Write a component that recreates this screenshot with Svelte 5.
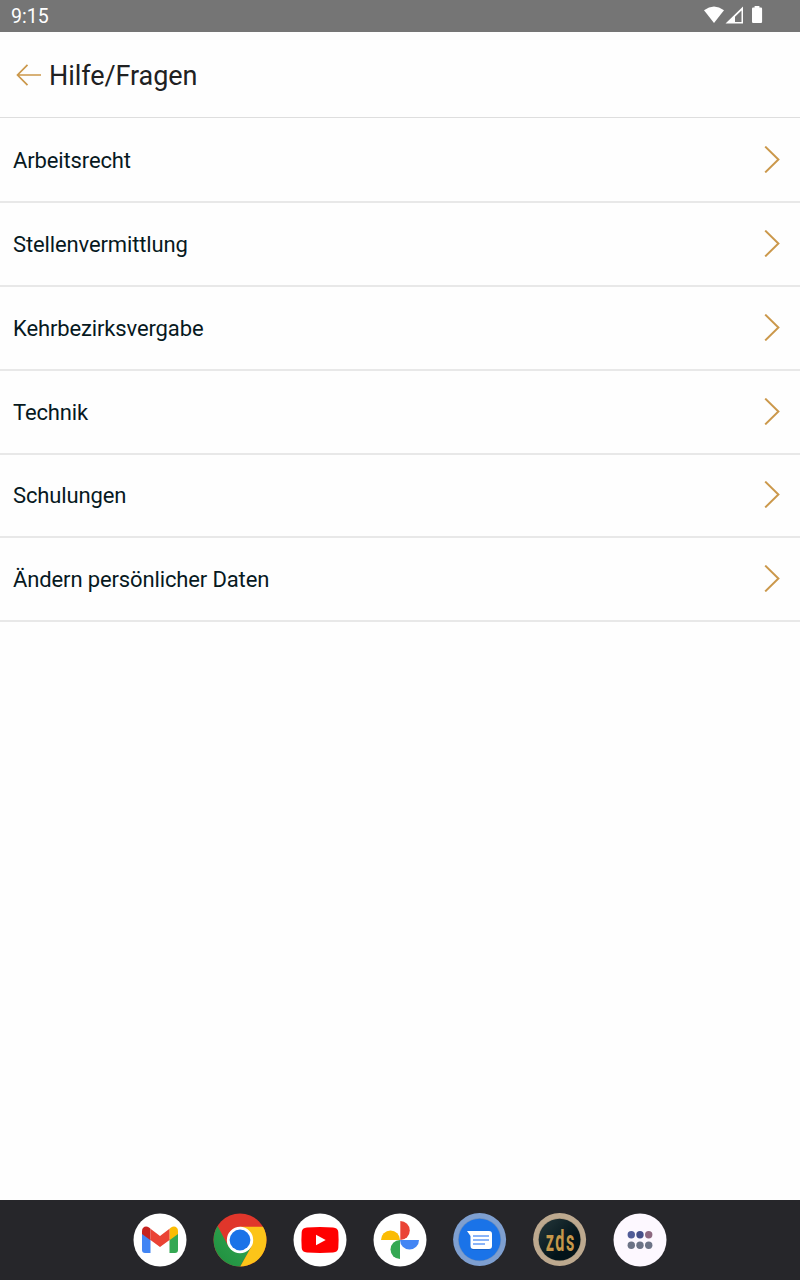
<script>
    const topics = [
        { label: "Arbeitsrecht" },
        { label: "Stellenvermittlung" },
        { label: "Kehrbezirksvergabe" },
        { label: "Technik" },
        { label: "Schulungen", short: true },
        { label: "Ändern persönlicher Daten" }
    ];

    const dots = [
        { x: 18.3, y: 21.8, color: "#515c98" },
        { x: 27, y: 21.8, color: "#454f89" },
        { x: 35.7, y: 21.8, color: "#8d6880" },
        { x: 18.3, y: 32.3, color: "#6c7386" },
        { x: 27, y: 32.3, color: "#6c7386" },
        { x: 35.7, y: 32.3, color: "#6c7386" }
    ];
</script>

<div class="screen">
    <div class="status-bar">
        <span class="clock">9:15</span>
        <svg class="status-icons" width="60" height="18" viewBox="0 0 60 18" fill="#fff">
            <path d="M0 4.2Q10-3 20 4.2L10 17Z" />
            <path fill-rule="evenodd" d="M21.5 17.5L39 0.5V17.5ZM31 16H37.5V4.4L31 10.8Z" />
            <path d="M50.6 0H55.4V1.6H57Q58.1 1.6 58.1 2.8V15.8Q58.1 17 57 17H49.1Q48 17 48 15.8V2.8Q48 1.6 49.1 1.6H50.6Z" />
        </svg>
    </div>

    <header>
        <button class="back" aria-label="Zurück">
            <svg width="26" height="24" viewBox="0 0 26 24">
                <path d="M25 12H1.5M11.5 1.8L1.5 12L11.5 22.2" />
            </svg>
        </button>
        <h1>Hilfe/Fragen</h1>
    </header>

    <main>
        {#each topics as topic}
            <button class="row" class:short={topic.short}>
                <span>{topic.label}</span>
                <svg width="16" height="27" viewBox="0 0 16 27">
                    <path d="M1.2 0.6L14.4 13.5L1.2 26.4" />
                </svg>
            </button>
        {/each}
    </main>

    <nav class="dock">
        <svg viewBox="0 0 54 54">
            <circle cx="27" cy="27" r="26.5" fill="#fff" />
            <path fill="#4285f4" d="M9 20L17.5 26.2V40H12Q9 40 9 37Z" />
            <path fill="#34a853" d="M45 20L36.5 26.2V40H42Q45 40 45 37Z" />
            <path fill="#c5221f" d="M9 21V18C9 14 13 12.3 16 14.6L17.5 15.8V27.3Z" />
            <path fill="#fbbc04" d="M45 21V18C45 14 41 12.3 38 14.6L36.5 15.8V27.3Z" />
            <path fill="#ea4335" d="M17.5 15.8L27 23L36.5 15.8V26.9L27 34L17.5 26.9Z" />
        </svg>

        <svg viewBox="0 0 54 54">
            <defs>
                <linearGradient id="chrome-green" x1="0" y1="1" x2="1" y2="0">
                    <stop offset="0" stop-color="#1e8e3e" />
                    <stop offset="1" stop-color="#34a853" />
                </linearGradient>
            </defs>
            <circle cx="27" cy="27" r="26.5" fill="#e0362b" />
            <path fill="url(#chrome-green)" d="M4.6 13A26.5 26.5 0 0 0 27.3 53.5L38.5 33.6L15.5 33.6Z" />
            <path fill="#fcc419" d="M27 13.8H50A26.5 26.5 0 0 1 27.3 53.5L38.5 33.6Z" />
            <circle cx="27" cy="27" r="13.2" fill="#fff" />
            <circle cx="27" cy="27" r="10.4" fill="#1a73e8" />
        </svg>

        <svg viewBox="0 0 54 54">
            <circle cx="27" cy="27" r="26.5" fill="#fff" />
            <path fill="#f00" d="M14 14.5Q27 13.7 40 14.5Q45 14.8 45.3 19Q45.9 27 45.3 35Q45 39.2 40 39.5Q27 40.3 14 39.5Q9 39.2 8.7 35Q8.1 27 8.7 19Q9 14.8 14 14.5Z" />
            <path fill="#fff" d="M23 21.7L32.7 27L23 32.3Z" />
        </svg>

        <svg viewBox="0 0 54 54">
            <circle cx="27" cy="27" r="26.5" fill="#fff" />
            <path fill="#ea4335" d="M27.3 8A9.5 9.5 0 0 1 27.3 27Z" />
            <path fill="#4285f4" d="M46 27A9.5 9.5 0 0 1 27 27Z" />
            <path fill="#34a853" d="M27 46A9.5 9.5 0 0 1 27 27Z" />
            <path fill="#fbbc04" d="M8 27A9.5 9.5 0 0 1 27 27Z" />
        </svg>

        <svg viewBox="0 0 54 54">
            <circle cx="26.6" cy="26.6" r="26.5" fill="#7e9fd0" />
            <circle cx="26.6" cy="26.6" r="21.6" fill="#6d8fbe" />
            <circle cx="26.6" cy="26.6" r="20.9" fill="#1a73e8" />
            <path fill="#1558b5" opacity="0.6" d="M17 33L19 37H36L39.5 33Z" />
            <path fill="#fff" d="M14 18H36Q39 18 39 21V33Q39 36 36 36H20.5Q17.5 36 17.5 33V23Z" />
            <path stroke="#8ab4f8" stroke-width="1.8" d="M20 23H36M20 27H36M20 31H32" />
        </svg>

        <svg viewBox="0 0 54 54">
            <defs>
                <linearGradient id="zds-bg" x1="0" y1="0" x2="1" y2="1">
                    <stop offset="0.2" stop-color="#1b2d31" />
                    <stop offset="0.65" stop-color="#03141a" />
                </linearGradient>
            </defs>
            <circle cx="26.6" cy="26.6" r="26.5" fill="#bda98f" />
            <circle cx="26.6" cy="26.6" r="21.6" fill="#a8967d" />
            <circle cx="26.6" cy="26.6" r="20.9" fill="url(#zds-bg)" />
            <text class="zds" transform="translate(12.7 37.6) scale(0.55 1)" textLength="52">zds</text>
        </svg>

        <svg viewBox="0 0 54 54">
            <circle cx="27" cy="27" r="26.5" fill="#fdf8ff" />
            {#each dots as dot}
                <circle cx={dot.x} cy={dot.y} r="3.7" fill={dot.color} />
            {/each}
        </svg>
    </nav>
</div>

<style>
    :global(body) {
        background: #fff;
    }

    .screen {
        display: flex;
        flex-direction: column;
        height: 1280px;
        font-family: Roboto, sans-serif;
        background: #fefefe;
    }

    .status-bar {
        display: flex;
        align-items: center;
        justify-content: space-between;
        box-sizing: border-box;
        height: 32px;
        padding: 0 36px 0 11px;
        color: #fff;
        background: #757575;
    }

    .clock {
        padding-top: 2px;
        font-size: 19.5px;
        line-height: 30px;
    }

    .status-icons {
        margin-bottom: 2px;
    }

    header {
        display: flex;
        align-items: center;
        box-sizing: border-box;
        height: 86px;
        padding-left: 16px;
        border-bottom: 1px solid #dedede;
    }

    button {
        padding: 0;
        border: 0;
        background: none;
        font: inherit;
    }

    .back {
        display: flex;
    }

    .back path,
    .row path {
        fill: none;
        stroke: #cb984b;
        stroke-width: 1.7;
    }

    .row path {
        stroke-width: 2;
    }

    h1 {
        margin: 2px 0 0 7px;
        color: #202122;
        font-size: 27px;
        font-weight: 400;
        line-height: 32px;
        letter-spacing: -0.07px;
    }

    main {
        flex: 1;
        padding-top: 1px;
    }

    .row {
        display: flex;
        align-items: center;
        justify-content: space-between;
        box-sizing: border-box;
        width: 100%;
        height: 84px;
        padding: 0 20px 0 13px;
        border-bottom: 2px solid #e8e8e8;
        color: #07191e;
        font-size: 22px;
        line-height: 26px;
        letter-spacing: -0.13px;
        text-align: left;
    }

    .row span {
        margin-top: 2px;
    }

    .row svg {
        margin-bottom: 1px;
    }

    .row.short {
        height: 83px;
    }

    .row.short span {
        margin-top: 0;
    }

    .row.short svg {
        margin-bottom: 2px;
    }

    .dock {
        display: flex;
        align-items: center;
        justify-content: center;
        gap: 26px;
        height: 80px;
        background: #26262a;
    }

    .dock svg {
        width: 54px;
        height: 54px;
    }

    .zds {
        fill: #c5974a;
        font-family: Roboto, sans-serif;
        font-size: 29.5px;
        font-weight: 700;
    }
</style>
